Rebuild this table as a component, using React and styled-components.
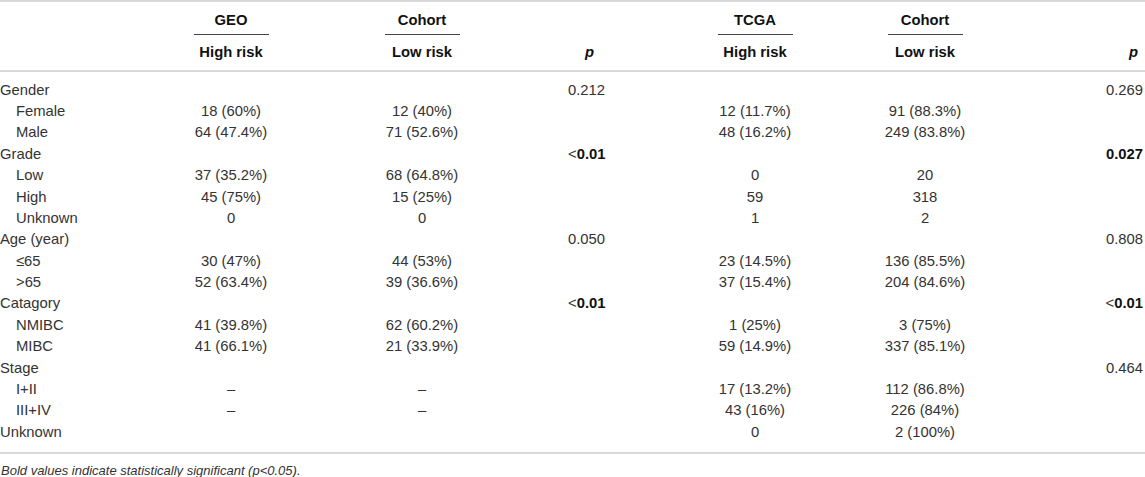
import React from "react";
import styled, { createGlobalStyle } from "styled-components";

const GlobalStyle = createGlobalStyle`
  body {
    margin: 0;
    background: #fff;
    font-family: "Liberation Sans", Arial, sans-serif;
    color: #333;
  }
`;

const COLS = "160px 142px 240px 98px 230px 110px 165px";

const Wrapper = styled.div`
  width: 1145px;
`;

const Table = styled.div`
  border-top: 2px solid #d9d9d9;
  border-bottom: 2px solid #d9d9d9;
`;

const Head = styled.div`
  border-bottom: 2px solid #d9d9d9;
`;

const Row = styled.div`
  display: grid;
  grid-template-columns: ${COLS};
  align-items: center;
  height: ${(p) => p.$h || "21.375px"};
  font-size: 14.8px;
`;

const Body = styled.div`
  padding: 7px 0 10px;
`;

const GroupCell = styled.div`
  text-align: center;
  align-self: start;
  padding-top: 8px;
`;

const GroupLabel = styled.span`
  display: inline-block;
  width: 75px;
  line-height: 20px;
  padding-bottom: 4px;
  border-bottom: 1px solid #444;
  font-weight: bold;
  color: #111;
`;

const HeadCell = styled.div`
  align-self: start;
  padding-top: 6px;
  line-height: 20px;
  font-weight: bold;
  color: #111;
  text-align: ${(p) => p.$align || "center"};
  padding-left: ${(p) => p.$pl || "0"};
  padding-right: ${(p) => p.$pr || "0"};
  font-style: ${(p) => (p.$italic ? "italic" : "normal")};
`;

const Label = styled.div`
  padding-left: ${(p) => (p.$sub ? "16px" : "0")};
  white-space: nowrap;
`;

const Value = styled.div`
  text-align: center;
  white-space: nowrap;
`;

const PValue = styled.div`
  text-align: ${(p) => (p.$right ? "right" : "left")};
  padding: ${(p) => (p.$right ? "0 2px 0 0" : "0 0 0 26px")};
  font-weight: ${(p) => (p.$bold ? "bold" : "normal")};
  color: ${(p) => (p.$bold ? "#111" : "inherit")};
`;

const Lt = styled.span`
  font-weight: normal;
  color: #333;
`;

const Note = styled.div`
  font-style: italic;
  font-size: 13px;
  line-height: 20px;
  margin-top: 7px;
  padding-left: 1px;
`;

const rows = [
  { label: "Gender", p1: "0.212", p2: "0.269" },
  { label: "Female", sub: true, v: ["18 (60%)", "12 (40%)", "12 (11.7%)", "91 (88.3%)"] },
  { label: "Male", sub: true, v: ["64 (47.4%)", "71 (52.6%)", "48 (16.2%)", "249 (83.8%)"] },
  { label: "Grade", p1: "lt", p2: "0.027", b1: true, b2: true },
  { label: "Low", sub: true, v: ["37 (35.2%)", "68 (64.8%)", "0", "20"] },
  { label: "High", sub: true, v: ["45 (75%)", "15 (25%)", "59", "318"] },
  { label: "Unknown", sub: true, v: ["0", "0", "1", "2"] },
  { label: "Age (year)", p1: "0.050", p2: "0.808" },
  { label: "≤65", sub: true, v: ["30 (47%)", "44 (53%)", "23 (14.5%)", "136 (85.5%)"] },
  { label: ">65", sub: true, v: ["52 (63.4%)", "39 (36.6%)", "37 (15.4%)", "204 (84.6%)"] },
  { label: "Catagory", p1: "lt", p2: "lt", b1: true, b2: true },
  { label: "NMIBC", sub: true, v: ["41 (39.8%)", "62 (60.2%)", "1 (25%)", "3 (75%)"] },
  { label: "MIBC", sub: true, v: ["41 (66.1%)", "21 (33.9%)", "59 (14.9%)", "337 (85.1%)"] },
  { label: "Stage", p2: "0.464" },
  { label: "I+II", sub: true, v: ["–", "–", "17 (13.2%)", "112 (86.8%)"] },
  { label: "III+IV", sub: true, v: ["–", "–", "43 (16%)", "226 (84%)"] },
  { label: "Unknown", v: ["", "", "0", "2 (100%)"] },
];

const renderP = (val) =>
  val === "lt" ? (
    <>
      <Lt>&lt;</Lt>0.01
    </>
  ) : (
    val
  );

export default function App() {
  return (
    <Wrapper>
      <GlobalStyle />
      <Table>
        <Head>
          <Row $h="34px">
            <div />
            <GroupCell>
              <GroupLabel>GEO</GroupLabel>
            </GroupCell>
            <GroupCell>
              <GroupLabel>Cohort</GroupLabel>
            </GroupCell>
            <div />
            <GroupCell>
              <GroupLabel>TCGA</GroupLabel>
            </GroupCell>
            <GroupCell>
              <GroupLabel>Cohort</GroupLabel>
            </GroupCell>
            <div />
          </Row>
          <Row $h="34px">
            <div />
            <HeadCell>High risk</HeadCell>
            <HeadCell>Low risk</HeadCell>
            <HeadCell $italic $align="left" $pl="43px">
              p
            </HeadCell>
            <HeadCell>High risk</HeadCell>
            <HeadCell>Low risk</HeadCell>
            <HeadCell $italic $align="right" $pr="7px">
              p
            </HeadCell>
          </Row>
        </Head>
        <Body>
          {rows.map((r, i) => (
            <Row key={i}>
              <Label $sub={r.sub}>{r.label}</Label>
              <Value>{r.v ? r.v[0] : ""}</Value>
              <Value>{r.v ? r.v[1] : ""}</Value>
              <PValue $bold={r.b1}>{r.p1 ? renderP(r.p1) : ""}</PValue>
              <Value>{r.v ? r.v[2] : ""}</Value>
              <Value>{r.v ? r.v[3] : ""}</Value>
              <PValue $right $bold={r.b2}>
                {r.p2 ? renderP(r.p2) : ""}
              </PValue>
            </Row>
          ))}
        </Body>
      </Table>
      <Note>Bold values indicate statistically significant (p&lt;0.05).</Note>
    </Wrapper>
  );
}
